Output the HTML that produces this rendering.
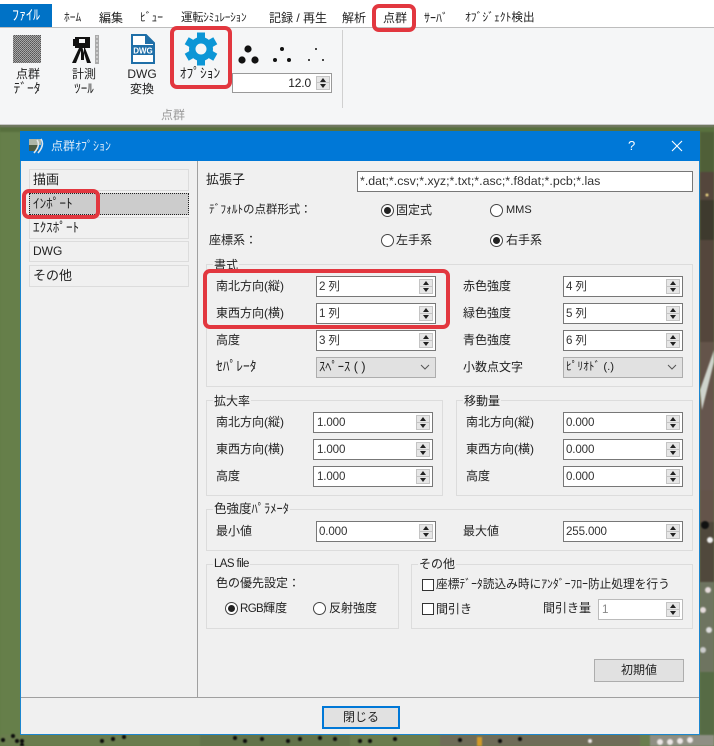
<!DOCTYPE html>
<html lang="ja"><head><meta charset="utf-8"><title>点群オプション</title>
<style>
*{box-sizing:border-box}
html,body{margin:0;padding:0}
body{width:714px;height:746px;position:relative;overflow:hidden;background:#5f7a45;font-family:"Liberation Sans","Noto Sans CJK JP",sans-serif;font-size:12px;color:#222}
.a{position:absolute}
.t{position:absolute;line-height:16px;white-space:nowrap;font-size:12px;color:#222}
.c{transform:translateX(-50%)}
.g{position:absolute;border:1px solid #dcdcdc}
.lg{position:absolute;background:#f0f0f0;line-height:14px;padding:0 1px;white-space:nowrap;color:#222}
.s{position:absolute;width:120px;height:21px;background:#fff;border:1px solid #777;line-height:20px;padding-left:5px;white-space:nowrap;color:#333;font-size:11.6px;letter-spacing:-.15px}
.s i{position:absolute;right:2px;width:14px;height:8px;background:#e6e6e6;border:1px solid #c4c4c4}
.s i.u{top:2px}.s i.d{bottom:2px}
.s i::after{content:"";position:absolute;left:3px;top:1px;border-left:3px solid transparent;border-right:3px solid transparent}
.s i.u::after{border-bottom:4px solid #222}
.s i.d::after{border-top:4px solid #222}
.cb{position:absolute;width:120px;height:21px;background:#e1e1e1;border:1px solid #adadad;line-height:19px;padding-left:2px;color:#222;white-space:nowrap}
.cb svg{position:absolute;right:5px;top:6px}
.r{position:absolute;width:13px;height:13px;border:1px solid #444;border-radius:50%;background:#fff}
.r.on::after{content:"";position:absolute;left:2px;top:2px;width:7px;height:7px;border-radius:50%;background:#222}
.k{position:absolute;width:12px;height:12px;border:1px solid #333;background:#fff}
.li{position:absolute;left:29px;width:160px;height:22px;border:1px solid #dcdcdc;line-height:19px;padding-left:3px;font-size:12px;color:#222;background:#f0f0f0}
.red{position:absolute;border:4px solid #e2373f;border-radius:7px}
.btn{position:absolute;background:#e1e1e1;text-align:center;color:#222}
</style></head><body>

<!-- aerial background -->
<svg class="a" style="left:0;top:125px;filter:blur(.8px)" width="714" height="621" viewBox="0 125 714 621">
<rect x="0" y="125" width="714" height="621" fill="#667f4a"/>
<rect x="0" y="125" width="714" height="2" fill="#77796a"/>
<rect x="0" y="127" width="714" height="5" fill="#58703e"/>
<rect x="700" y="132" width="14" height="40" fill="#4f5f38"/>
<rect x="700" y="172" width="14" height="170" fill="#54463c"/>
<rect x="700" y="200" width="14" height="40" fill="#3e3a2e"/>
<rect x="700" y="342" width="14" height="180" fill="#64544a"/>
<rect x="700" y="400" width="14" height="90" fill="#66564e"/>
<rect x="700" y="522" width="14" height="60" fill="#50483c"/>
<rect x="700" y="582" width="14" height="90" fill="#6e7460"/>
<rect x="700" y="672" width="14" height="74" fill="#566b45"/>
<path d="M700 390L714 350V362L702 410Z" fill="#cfd4cc"/>
<circle cx="707" cy="195" r="1.5" fill="#e8d080"/><circle cx="705" cy="525" r="4" fill="#111"/><circle cx="710" cy="540" r="3" fill="#eee"/>
<circle cx="708" cy="590" r="3" fill="#e6dcdc"/><circle cx="703" cy="610" r="3" fill="#e6dcdc"/><circle cx="709" cy="630" r="3" fill="#ddd"/><circle cx="703" cy="650" r="3" fill="#ccc"/>
<rect x="0" y="735" width="714" height="11" fill="#6a7d4e"/>
<rect x="200" y="735" width="150" height="11" fill="#62734a"/>
<rect x="440" y="735" width="200" height="11" fill="#6f6c58"/>
<rect x="650" y="735" width="64" height="11" fill="#8f8f84"/>
<g fill="#0b0b0b">
<circle cx="13" cy="736" r="2"/><circle cx="3" cy="740" r="2"/><circle cx="17" cy="741" r="2"/><circle cx="22" cy="741" r="2"/><circle cx="22" cy="745" r="2"/>
<circle cx="102" cy="741" r="2"/><circle cx="113" cy="739" r="2"/><circle cx="124" cy="737" r="2"/>
<circle cx="235" cy="738" r="2"/><circle cx="245" cy="741" r="2"/><circle cx="262" cy="739" r="2"/><circle cx="288" cy="741" r="2"/><circle cx="300" cy="739" r="2"/><circle cx="320" cy="738" r="2"/><circle cx="335" cy="739" r="2"/><circle cx="360" cy="741" r="2"/><circle cx="370" cy="741" r="2"/><circle cx="395" cy="739" r="2"/>
<circle cx="460" cy="740" r="2"/><circle cx="500" cy="741" r="2"/><circle cx="520" cy="739" r="2"/>
</g>
<rect x="477" y="737" width="5" height="9" fill="#d19a2a"/>
<g fill="#ece6e6"><circle cx="590" cy="741" r="2"/><circle cx="660" cy="742" r="3"/><circle cx="670" cy="742" r="3"/><circle cx="680" cy="741" r="3"/><circle cx="690" cy="740" r="3"/></g>
</svg>

<!-- tab bar -->
<div class="a" style="left:0;top:0;width:714px;height:28px;background:#fff;border-bottom:1px solid #bdbdbd"></div>
<div class="a" style="left:0;top:4px;width:52px;height:23px;background:#0072c6;color:#fff;line-height:23px;text-align:center;font-size:14px">ﾌｧｲﾙ</div>
<div class="t" style="left:64px;top:10px;font-size:11.5px">ﾎｰﾑ</div>
<div class="t" style="left:99px;top:10px">編集</div>
<div class="t" style="left:140px;top:10px;font-size:11.5px">ﾋﾞｭｰ</div>
<div class="t" style="left:181px;top:10px;font-size:11.4px;letter-spacing:-.3px">運転ｼﾐｭﾚｰｼｮﾝ</div>
<div class="t" style="left:269px;top:10px">記録 / 再生</div>
<div class="t" style="left:342px;top:10px">解析</div>
<div class="t" style="left:383px;top:10px">点群</div>
<div class="t" style="left:424px;top:10px;font-size:12px">ｻｰﾊﾞ</div>
<div class="t" style="left:465px;top:10px;font-size:11.6px">ｵﾌﾞｼﾞｪｸﾄ検出</div>

<!-- ribbon -->
<div class="a" style="left:0;top:28px;width:714px;height:97px;background:#f5f6f7;border-bottom:1px solid #c8c8c8"></div>
<svg class="a" style="left:12px;top:33px" width="32" height="32" viewBox="0 0 32 32"><defs><pattern id="p" width="2" height="2" patternUnits="userSpaceOnUse"><rect width="2" height="2" fill="#a8a8a8"/><rect width="1" height="1" fill="#555"/><rect x="1" y="1" width="1" height="1" fill="#666"/></pattern></defs><rect x="1" y="2" width="28" height="28" fill="url(#p)"/></svg>
<div class="t c" style="left:28px;top:66px">点群</div>
<div class="t c" style="left:27px;top:81px;font-size:13.5px">ﾃﾞｰﾀ</div>
<svg class="a" style="left:70px;top:33px" width="32" height="32" viewBox="0 0 32 32"><path d="M3 6H5V4H20V15H5V13H3Z" fill="#111"/><rect x="9" y="6" width="6" height="4" fill="#f5f6f7"/><path d="M2 30L9 15H12L6 30ZM21 30L15 15H12.5L17 30ZM11 15H14V27H11Z" fill="#111"/><rect x="25" y="2" width="4" height="29" fill="#aaa"/><path d="M26 4H28M26 8H28M26 12H28M26 16H28M26 20H28M26 24H28M26 28H28" stroke="#eee"/></svg>
<div class="t c" style="left:84px;top:66px">計測</div>
<div class="t c" style="left:84px;top:81px;font-size:13px">ﾂｰﾙ</div>
<svg class="a" style="left:130px;top:34px" width="26" height="30" viewBox="0 0 26 30"><path d="M2 1H16L24 9V29H2Z" fill="#fff" stroke="#1f6fa8" stroke-width="2"/><path d="M15 1V10H24Z" fill="#1f6fa8"/><rect x="2" y="11" width="22" height="10" fill="#1f6fa8"/><text x="13" y="19.5" text-anchor="middle" font-family="Liberation Sans" font-size="8" font-weight="bold" fill="#fff">DWG</text></svg>
<div class="t c" style="left:142px;top:66px">DWG</div>
<div class="t c" style="left:142px;top:81px">変換</div>
<svg class="a" style="left:184px;top:32px" width="34" height="34" viewBox="-17 -17 34 34"><g fill="#0c96d6"><circle r="12"/><rect x="-4" y="-16.5" width="8" height="8"/><rect x="-4" y="-16.5" width="8" height="8" transform="rotate(60)"/><rect x="-4" y="-16.5" width="8" height="8" transform="rotate(120)"/><rect x="-4" y="-16.5" width="8" height="8" transform="rotate(180)"/><rect x="-4" y="-16.5" width="8" height="8" transform="rotate(240)"/><rect x="-4" y="-16.5" width="8" height="8" transform="rotate(300)"/></g><circle r="5.5" fill="#f5f6f7"/></svg>
<div class="t c" style="left:200px;top:66px;font-size:13.5px">ｵﾌﾟｼｮﾝ</div>
<svg class="a" style="left:232px;top:40px" width="100" height="28"><g fill="#111"><circle cx="16" cy="9" r="3.6"/><circle cx="10" cy="20" r="3.6"/><circle cx="23" cy="20" r="3.6"/><circle cx="50" cy="9" r="2"/><circle cx="43" cy="20" r="2"/><circle cx="57" cy="20" r="2"/><circle cx="84" cy="9" r="1"/><circle cx="77" cy="20" r="1"/><circle cx="91" cy="20" r="1"/></g></svg>
<div class="s" style="left:232px;top:73px;width:100px;height:20px;border-color:#999;line-height:18px;padding:0 20px 0 0;text-align:right;color:#222;font-size:12px">12.0<i class="u" style="right:1px"></i><i class="d" style="right:1px"></i></div>
<div class="a" style="left:342px;top:30px;width:1px;height:78px;background:#d0d0d0"></div>
<div class="t c" style="left:173px;top:107px;color:#9a9a9a">点群</div>

<!-- dialog -->
<div class="a" style="left:20px;top:131px;width:680px;height:604px;background:#f0f0f0;border:1px solid #1c86cf"></div>
<div class="a" style="left:20px;top:131px;width:680px;height:30px;background:#0078d7"></div>
<svg class="a" style="left:28px;top:137px" width="18" height="18" viewBox="0 0 18 18"><rect x="1" y="2" width="12" height="6" fill="#aeb6a8"/><rect x="1" y="8" width="9" height="6" fill="#4c5c44"/><path d="M13 2Q17 8 10 16M9 3Q13 8 6 16" fill="none" stroke="#e0e6ea" stroke-width="1.6"/></svg>
<div class="t" style="left:51px;top:138px;color:#dbeaf7;font-size:12px">点群ｵﾌﾟｼｮﾝ</div>
<div class="t" style="left:628px;top:138px;color:#fff;font-size:13px">?</div>
<svg class="a" style="left:671px;top:140px" width="12" height="12"><path d="M1 1L11 11M11 1L1 11" stroke="#fff" stroke-width="1.1"/></svg>

<div class="a" style="left:197px;top:161px;width:1px;height:536px;background:#a0a0a0"></div>
<div class="a" style="left:21px;top:697px;width:678px;height:1px;background:#a0a0a0"></div>

<div class="li" style="top:169px;font-size:13px">描画</div>
<div class="li" style="top:193px;background:#cccccc;border:1px dotted #222;font-size:13.2px">ｲﾝﾎﾟｰﾄ</div>
<div class="li" style="top:217px;font-size:13.2px">ｴｸｽﾎﾟｰﾄ</div>
<div class="li" style="top:241px;height:21px">DWG</div>
<div class="li" style="top:265px;font-size:13px">その他</div>

<div class="t" style="left:206px;top:172px;font-size:13px">拡張子</div>
<div class="a" style="left:357px;top:171px;width:336px;height:21px;background:#fff;border:1px solid #777;line-height:19px;padding-left:2px;color:#333;font-size:12.4px;white-space:nowrap">*.dat;*.csv;*.xyz;*.txt;*.asc;*.f8dat;*.pcb;*.las</div>

<div class="t" style="left:209px;top:202px;font-size:11.4px">ﾃﾞﾌｫﾙﾄの点群形式：</div>
<div class="r on" style="left:381px;top:204px"></div><div class="t" style="left:396px;top:202px">固定式</div>
<div class="r" style="left:490px;top:204px"></div><div class="t" style="left:506px;top:202px;font-size:11px">MMS</div>
<div class="t" style="left:209px;top:232px">座標系：</div>
<div class="r" style="left:381px;top:234px"></div><div class="t" style="left:396px;top:232px">左手系</div>
<div class="r on" style="left:490px;top:234px"></div><div class="t" style="left:506px;top:232px">右手系</div>

<!-- 書式 -->
<div class="g" style="left:206px;top:264px;width:487px;height:123px"></div>
<div class="lg" style="left:213px;top:258px">書式</div>
<div class="t" style="left:216px;top:278px">南北方向(縦)</div>
<div class="t" style="left:216px;top:305px">東西方向(横)</div>
<div class="t" style="left:216px;top:332px">高度</div>
<div class="t" style="left:216px;top:359px;font-size:13.5px">ｾﾊﾟﾚｰﾀ</div>
<div class="s" style="left:316px;top:276px;padding-left:2px">2 列<i class="u"></i><i class="d"></i></div>
<div class="s" style="left:316px;top:303px;padding-left:2px">1 列<i class="u"></i><i class="d"></i></div>
<div class="s" style="left:316px;top:330px;padding-left:2px">3 列<i class="u"></i><i class="d"></i></div>
<div class="cb" style="left:316px;top:357px;font-size:12.5px">ｽﾍﾟｰｽ ( )<svg width="10" height="7"><path d="M1 1L5 5L9 1" fill="none" stroke="#555"/></svg></div>
<div class="t" style="left:463px;top:278px">赤色強度</div>
<div class="t" style="left:463px;top:305px">緑色強度</div>
<div class="t" style="left:463px;top:332px">青色強度</div>
<div class="t" style="left:463px;top:359px">小数点文字</div>
<div class="s" style="left:563px;top:276px;padding-left:2px">4 列<i class="u"></i><i class="d"></i></div>
<div class="s" style="left:563px;top:303px;padding-left:2px">5 列<i class="u"></i><i class="d"></i></div>
<div class="s" style="left:563px;top:330px;padding-left:2px">6 列<i class="u"></i><i class="d"></i></div>
<div class="cb" style="left:563px;top:357px;font-size:11.4px">ﾋﾟﾘｵﾄﾞ (.)<svg width="10" height="7"><path d="M1 1L5 5L9 1" fill="none" stroke="#555"/></svg></div>

<!-- 拡大率 -->
<div class="g" style="left:206px;top:400px;width:237px;height:96px"></div>
<div class="lg" style="left:213px;top:394px">拡大率</div>
<div class="t" style="left:216px;top:414px">南北方向(縦)</div>
<div class="t" style="left:216px;top:441px">東西方向(横)</div>
<div class="t" style="left:216px;top:468px">高度</div>
<div class="s" style="left:313px;top:412px;padding-left:3px">1.000<i class="u"></i><i class="d"></i></div>
<div class="s" style="left:313px;top:439px;padding-left:3px">1.000<i class="u"></i><i class="d"></i></div>
<div class="s" style="left:313px;top:466px;padding-left:3px">1.000<i class="u"></i><i class="d"></i></div>

<!-- 移動量 -->
<div class="g" style="left:456px;top:400px;width:237px;height:96px"></div>
<div class="lg" style="left:463px;top:394px">移動量</div>
<div class="t" style="left:466px;top:414px">南北方向(縦)</div>
<div class="t" style="left:466px;top:441px">東西方向(横)</div>
<div class="t" style="left:466px;top:468px">高度</div>
<div class="s" style="left:563px;top:412px;padding-left:2px">0.000<i class="u"></i><i class="d"></i></div>
<div class="s" style="left:563px;top:439px;padding-left:2px">0.000<i class="u"></i><i class="d"></i></div>
<div class="s" style="left:563px;top:466px;padding-left:2px">0.000<i class="u"></i><i class="d"></i></div>

<!-- 色強度 -->
<div class="g" style="left:206px;top:509px;width:487px;height:42px"></div>
<div class="lg" style="left:213px;top:502px;font-size:12.5px">色強度ﾊﾟﾗﾒｰﾀ</div>
<div class="t" style="left:216px;top:523px">最小値</div>
<div class="s" style="left:316px;top:521px;padding-left:2px">0.000<i class="u"></i><i class="d"></i></div>
<div class="t" style="left:463px;top:523px">最大値</div>
<div class="s" style="left:563px;top:521px;padding-left:2px">255.000<i class="u"></i><i class="d"></i></div>

<!-- LAS -->
<div class="g" style="left:206px;top:564px;width:193px;height:65px"></div>
<div class="lg" style="left:213px;top:557px;font-size:11.5px;letter-spacing:-.6px">LAS file</div>
<div class="t" style="left:216px;top:575px">色の優先設定：</div>
<div class="r on" style="left:225px;top:602px"></div><div class="t" style="left:240px;top:600px"><span style="font-size:11.5px;letter-spacing:-.6px">RGB</span>輝度</div>
<div class="r" style="left:313px;top:602px"></div><div class="t" style="left:329px;top:600px">反射強度</div>

<!-- その他 -->
<div class="g" style="left:411px;top:564px;width:282px;height:65px"></div>
<div class="lg" style="left:418px;top:557px">その他</div>
<div class="k" style="left:422px;top:579px"></div><div class="t" style="left:436px;top:577px;font-size:11.7px">座標ﾃﾞｰﾀ読込み時にｱﾝﾀﾞｰﾌﾛｰ防止処理を行う</div>
<div class="k" style="left:422px;top:603px"></div><div class="t" style="left:436px;top:601px">間引き</div>
<div class="t" style="left:543px;top:600px">間引き量</div>
<div class="s" style="left:598px;top:599px;width:85px;border-color:#bbb;color:#888;padding-left:3px">1<i class="u"></i><i class="d"></i></div>

<div class="btn" style="left:594px;top:659px;width:90px;height:23px;border:1px solid #adadad;line-height:21px">初期値</div>
<div class="btn" style="left:322px;top:706px;width:78px;height:23px;border:2px solid #0078d7;line-height:19px">閉じる</div>

<!-- red callouts -->
<div class="red" style="left:170px;top:26px;width:62px;height:63px"></div>
<div class="red" style="left:372px;top:4px;width:44px;height:28px"></div>
<div class="red" style="left:22px;top:189px;width:78px;height:30px"></div>
<div class="red" style="left:203px;top:269px;width:247px;height:60px"></div>
</body></html>
